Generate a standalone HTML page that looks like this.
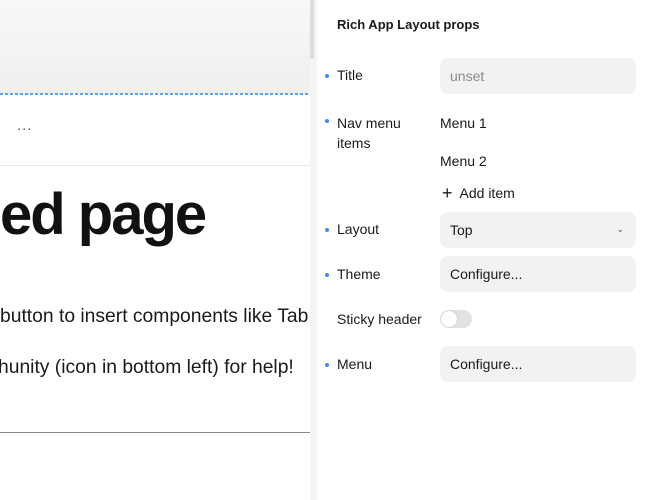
<!DOCTYPE html>
<html><head><style>
*{margin:0;padding:0;box-sizing:border-box}
body{width:653px;height:500px;overflow:hidden;background:#fff;font-family:"Liberation Sans",sans-serif;position:relative;color:#1a1a1a}
.a{position:absolute;white-space:nowrap}
.inp{position:absolute;left:440px;width:196px;height:36px;border-radius:8px;background:#f2f2f0;font-size:14px;line-height:36px;padding-left:10px;color:#1a1a1a}
.lab{position:absolute;left:337px;font-size:14px;color:#1a1a1a}
.dot{position:absolute;left:325px;width:4px;height:4px;border-radius:2px;background:#3b8ff0}
</style></head><body>
<div class="a" style="left:0;top:0;width:310px;height:94px;background:linear-gradient(#f8f8f6,#efefed)"></div>
<div class="a" style="left:0;top:93px;width:310px;height:2px;background:repeating-linear-gradient(90deg,#5aa2f5 0 3px,transparent 3px 5px)"></div>
<div class="a" style="left:17px;top:117px;font-size:15px;color:#555;letter-spacing:1px">...</div>
<div class="a" style="left:0;top:165px;width:310px;height:1px;background:#e6e6e6"></div>
<div class="a" style="left:0;top:181px;font-size:58px;font-weight:bold;letter-spacing:-2px;color:#111">ed page</div>
<div class="a" style="left:0;top:306px;font-size:19.3px;color:#1a1a1a">button to insert components like Tab</div>
<div class="a" style="left:-2px;top:357px;font-size:19.3px;color:#1a1a1a">hunity (icon in bottom left) for help!</div>
<div class="a" style="left:0;top:432px;width:310px;height:1px;background:#888"></div>
<div class="a" style="left:310px;top:0;width:7px;height:500px;background:#f5f5f3"></div>
<div class="a" style="left:310px;top:0;width:4px;height:59px;background:#dcdcda;border-radius:2px"></div>

<div class="a" style="left:337px;top:17px;font-size:13px;font-weight:bold">Rich App Layout props</div>

<div class="dot" style="top:74px"></div><div class="lab" style="top:67px">Title</div>
<div class="inp" style="top:58px;color:#8a8a8a">unset</div>

<div class="dot" style="top:119px"></div><div class="lab" style="top:113px;line-height:20px">Nav menu<br>items</div>
<div class="a" style="left:440px;top:115px;font-size:14px">Menu 1</div>
<div class="a" style="left:440px;top:153px;font-size:14px">Menu 2</div>
<div class="a" style="left:442px;top:182px;font-size:14px"><span style="font-size:18px;position:relative;top:1px">+</span>&nbsp; Add item</div>

<div class="dot" style="top:228px"></div><div class="lab" style="top:221px">Layout</div>
<div class="inp" style="top:212px">Top<span style="position:absolute;right:12px;top:-1px;font-size:9px;color:#555">&#8964;</span></div>

<div class="dot" style="top:273px"></div><div class="lab" style="top:266px">Theme</div>
<div class="inp" style="top:256px">Configure...</div>

<div class="lab" style="top:311px">Sticky header</div>
<div class="a" style="left:440px;top:310px;width:32px;height:18px;border-radius:9px;background:#e2e2e0"><div style="position:absolute;left:1px;top:1px;width:16px;height:16px;border-radius:8px;background:#fff;box-shadow:0 0 1px #999"></div></div>

<div class="dot" style="top:363px"></div><div class="lab" style="top:356px">Menu</div>
<div class="inp" style="top:346px">Configure...</div>
</body></html>
